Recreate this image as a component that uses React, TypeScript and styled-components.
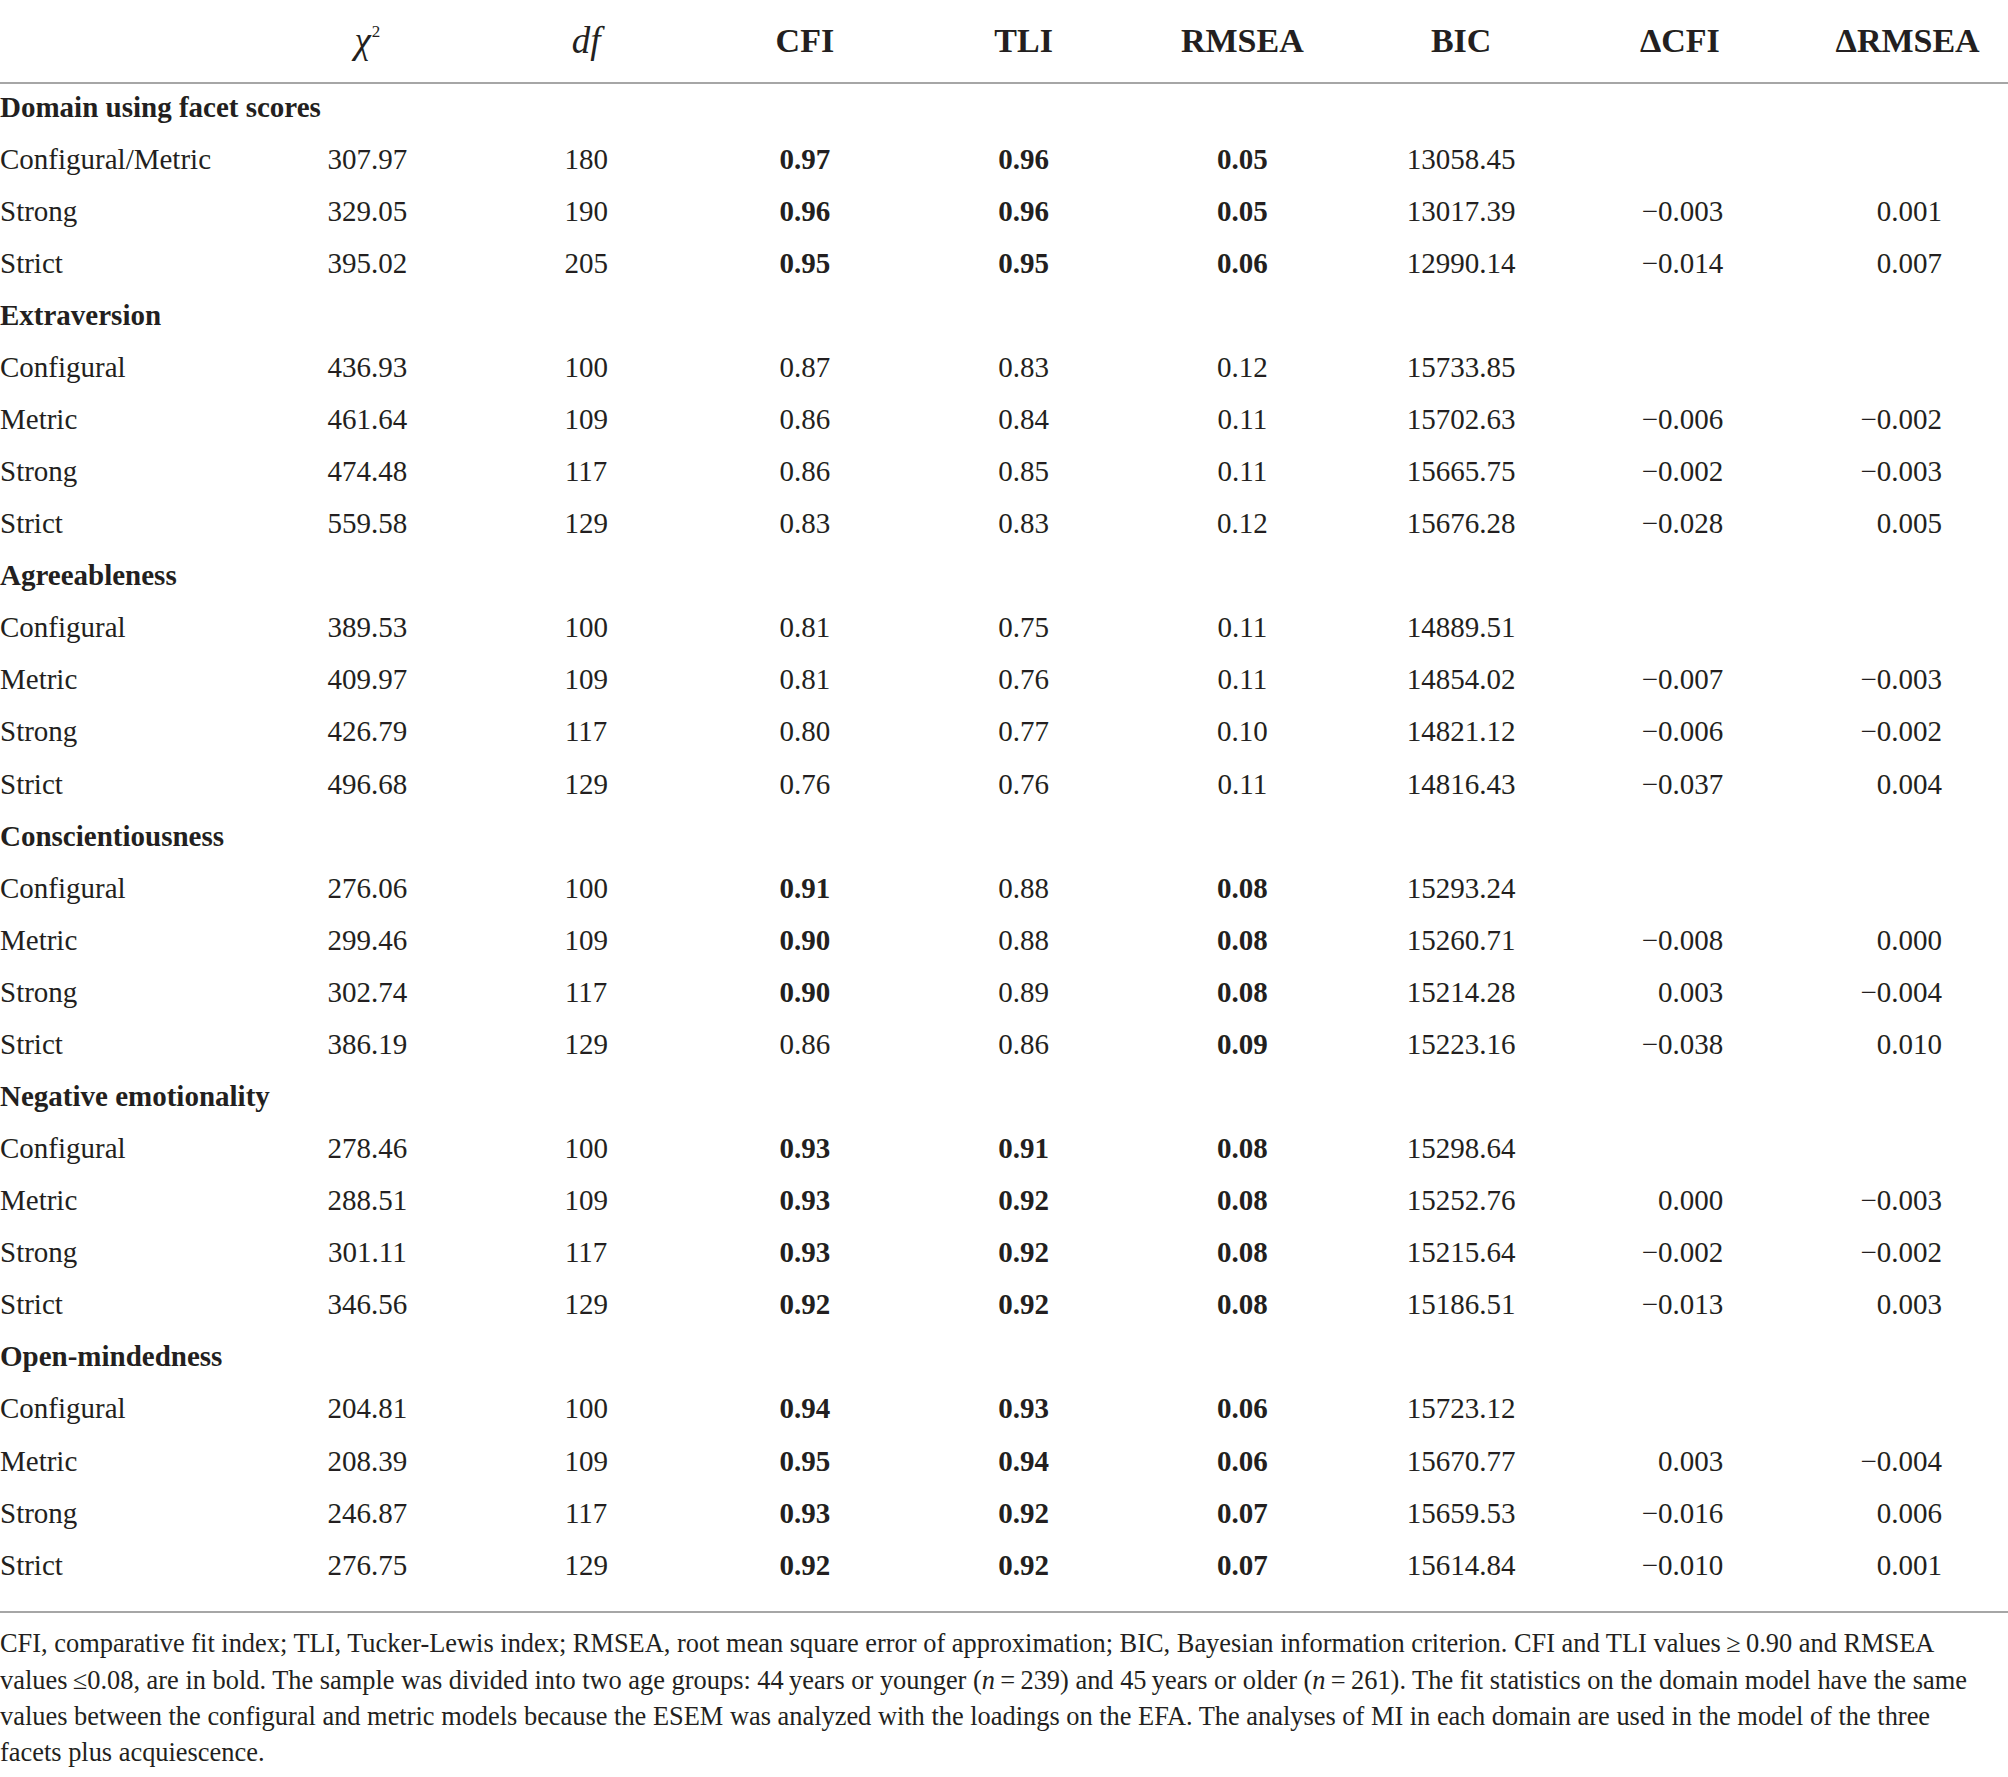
import React from "react";
import styled, { createGlobalStyle } from "styled-components";

const Global = createGlobalStyle`
  html, body { margin: 0; padding: 0; background: #ffffff; }
  body { font-family: "Liberation Serif", "Times New Roman", serif; color: #231f20; }
  * { box-sizing: border-box; }
`;

const Page = styled.div`
  width: 2008px;
  background: #ffffff;
`;

const Table = styled.div`
  display: flex;
  flex-direction: column;
  border-bottom: 2px solid #a6a6a6;
  padding-bottom: 17px;
`;

const Row = styled.div<{ $head?: boolean }>`
  display: grid;
  grid-template-columns: 258px repeat(8, 1fr);
  align-items: center;
  height: ${(p) => (p.$head ? "84px" : "52.08px")};
  padding-bottom: ${(p) => (p.$head ? "1px" : "6px")};
  font-size: 29px;
  line-height: 1;
  ${(p) => (p.$head ? "border-bottom: 2px solid #a6a6a6;" : "")}
`;

const Cell = styled.div<{ $align?: "left" | "center" | "right"; $bold?: boolean }>`
  text-align: ${(p) => p.$align ?? "center"};
  font-weight: ${(p) => (p.$bold ? 700 : 400)};
  white-space: nowrap;
  padding-right: ${(p) => (p.$align === "right" ? "66px" : "0")};
`;

const Label = styled.div<{ $section?: boolean }>`
  font-weight: ${(p) => (p.$section ? 700 : 400)};
  white-space: nowrap;
`;

const HeadCell = styled.div<{ $shift?: number }>`
  text-align: center;
  font-weight: 700;
  white-space: nowrap;
  font-size: 34px;
  padding-left: ${(p) => (p.$shift ? `${p.$shift * 2}px` : "0")};
`;

const Ital = styled.span`
  font-style: italic;
  font-weight: 400;
  font-size: 37px;
`;

const Sup = styled.sup`
  font-size: 17px;
  font-style: normal;
  font-weight: 400;
  vertical-align: 16px;
  margin-left: 1px;
`;

const Footer = styled.p`
  margin: 0;
  padding-top: 12px;
  font-size: 26.4px;
  line-height: 36.3px;
  white-space: nowrap;
`;

const I = styled.i`
  font-style: italic;
`;

type Section = { title: string; rows: string[][] };

const data: Section[] = [
  {
    title: "Domain using facet scores",
    rows: [
      ["Configural/Metric", "307.97", "180", "*0.97", "*0.96", "*0.05", "13058.45", "", ""],
      ["Strong", "329.05", "190", "*0.96", "*0.96", "*0.05", "13017.39", "−0.003", "0.001"],
      ["Strict", "395.02", "205", "*0.95", "*0.95", "*0.06", "12990.14", "−0.014", "0.007"],
    ],
  },
  {
    title: "Extraversion",
    rows: [
      ["Configural", "436.93", "100", "0.87", "0.83", "0.12", "15733.85", "", ""],
      ["Metric", "461.64", "109", "0.86", "0.84", "0.11", "15702.63", "−0.006", "−0.002"],
      ["Strong", "474.48", "117", "0.86", "0.85", "0.11", "15665.75", "−0.002", "−0.003"],
      ["Strict", "559.58", "129", "0.83", "0.83", "0.12", "15676.28", "−0.028", "0.005"],
    ],
  },
  {
    title: "Agreeableness",
    rows: [
      ["Configural", "389.53", "100", "0.81", "0.75", "0.11", "14889.51", "", ""],
      ["Metric", "409.97", "109", "0.81", "0.76", "0.11", "14854.02", "−0.007", "−0.003"],
      ["Strong", "426.79", "117", "0.80", "0.77", "0.10", "14821.12", "−0.006", "−0.002"],
      ["Strict", "496.68", "129", "0.76", "0.76", "0.11", "14816.43", "−0.037", "0.004"],
    ],
  },
  {
    title: "Conscientiousness",
    rows: [
      ["Configural", "276.06", "100", "*0.91", "0.88", "*0.08", "15293.24", "", ""],
      ["Metric", "299.46", "109", "*0.90", "0.88", "*0.08", "15260.71", "−0.008", "0.000"],
      ["Strong", "302.74", "117", "*0.90", "0.89", "*0.08", "15214.28", "0.003", "−0.004"],
      ["Strict", "386.19", "129", "0.86", "0.86", "*0.09", "15223.16", "−0.038", "0.010"],
    ],
  },
  {
    title: "Negative emotionality",
    rows: [
      ["Configural", "278.46", "100", "*0.93", "*0.91", "*0.08", "15298.64", "", ""],
      ["Metric", "288.51", "109", "*0.93", "*0.92", "*0.08", "15252.76", "0.000", "−0.003"],
      ["Strong", "301.11", "117", "*0.93", "*0.92", "*0.08", "15215.64", "−0.002", "−0.002"],
      ["Strict", "346.56", "129", "*0.92", "*0.92", "*0.08", "15186.51", "−0.013", "0.003"],
    ],
  },
  {
    title: "Open-mindedness",
    rows: [
      ["Configural", "204.81", "100", "*0.94", "*0.93", "*0.06", "15723.12", "", ""],
      ["Metric", "208.39", "109", "*0.95", "*0.94", "*0.06", "15670.77", "0.003", "−0.004"],
      ["Strong", "246.87", "117", "*0.93", "*0.92", "*0.07", "15659.53", "−0.016", "0.006"],
      ["Strict", "276.75", "129", "*0.92", "*0.92", "*0.07", "15614.84", "−0.010", "0.001"],
    ],
  },
];

function DataRow({ cells }: { cells: string[] }) {
  const [label, ...vals] = cells;
  return (
    <Row>
      <Label>{label}</Label>
      {vals.map((v, i) => {
        const bold = v.startsWith("*");
        const text = bold ? v.slice(1) : v;
        return (
          <Cell key={i} $bold={bold} $align={i >= 6 ? "right" : "center"}>
            {text}
          </Cell>
        );
      })}
    </Row>
  );
}

export default function App() {
  return (
    <Page>
      <Global />
      <Table>
        <Row $head>
          <div />
          <HeadCell>
            <Ital>χ</Ital>
            <Sup>2</Sup>
          </HeadCell>
          <HeadCell>
            <Ital>df</Ital>
          </HeadCell>
          <HeadCell>CFI</HeadCell>
          <HeadCell>TLI</HeadCell>
          <HeadCell>RMSEA</HeadCell>
          <HeadCell>BIC</HeadCell>
          <HeadCell>ΔCFI</HeadCell>
          <HeadCell $shift={9}>ΔRMSEA</HeadCell>
        </Row>
        {data.map((s) => (
          <React.Fragment key={s.title}>
            <Row>
              <Label $section>{s.title}</Label>
            </Row>
            {s.rows.map((r, i) => (
              <DataRow key={i} cells={r} />
            ))}
          </React.Fragment>
        ))}
      </Table>
      <Footer>
        CFI, comparative fit index; TLI, Tucker-Lewis index; RMSEA, root mean square error of approximation; BIC, Bayesian
        information criterion. CFI and TLI values{"\u2009"}≥{"\u2009"}0.90 and RMSEA
        <br />
        values{"\u2009"}≤0.08, are in bold. The sample was divided into two age groups: 44{"\u2009"}years or younger (
        <I>n</I>
        {"\u2009"}={"\u2009"}239) and 45{"\u2009"}years or older (<I>n</I>
        {"\u2009"}={"\u2009"}261). The fit statistics on the domain model have the same
        <br />
        values between the configural and metric models because the ESEM was analyzed with the loadings on the EFA. The
        analyses of MI in each domain are used in the model of the three
        <br />
        facets plus acquiescence.
      </Footer>
    </Page>
  );
}
